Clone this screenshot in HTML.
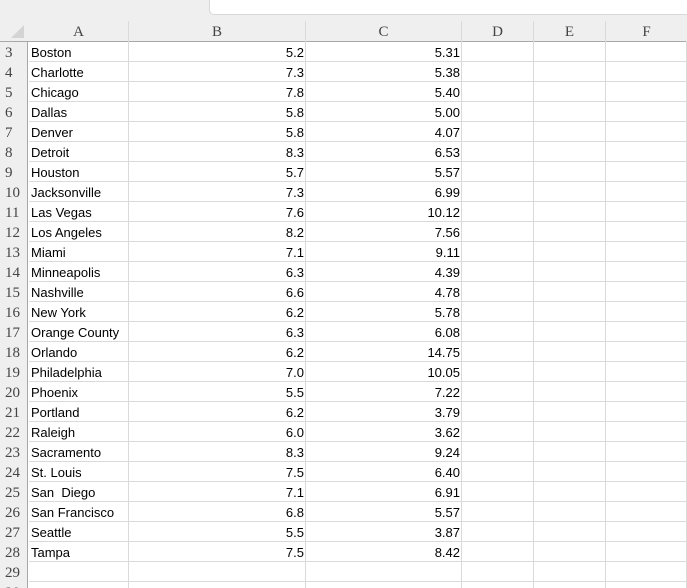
<!DOCTYPE html>
<html style="overflow:hidden;height:588px"><head><style>
body{margin:0;width:687px;height:588px;overflow:hidden;background:#fff;font-family:"Liberation Sans",sans-serif;position:relative}
.top{position:absolute;left:0;top:0;width:687px;height:21px;background:#efefef}
.box{position:absolute;left:209px;top:-1px;width:490px;height:14px;background:#fff;border:1px solid #d8d8d8;border-radius:0 0 0 5px}
.hdr{position:absolute;top:21px;height:20px;left:0;width:687px;background:#efefef;border-bottom:1px solid #a8a8a8}
.ch{position:absolute;top:21px;height:20px;line-height:22px;text-align:center;font-family:"Liberation Serif",serif;font-size:15px;color:#444;border-right:1px solid #dadada}
.rh{position:absolute;left:0;width:28px;height:20px;background:#efefef;border-right:1px solid #a8a8a8;font-family:"Liberation Serif",serif;font-size:15px;color:#444;line-height:23px;padding-left:5px;box-sizing:border-box}
.row{position:absolute;left:29px;width:658px;height:20px;border-bottom:1px solid #dadada;box-sizing:border-box}
.vl{position:absolute;top:41px;height:547px;width:1px;background:#dadada}
.c{position:absolute;height:20px;line-height:20px;font-size:13px;color:#000}
.a{left:31px}
.b{right:383px;text-align:right}
.cc{right:227px;text-align:right}
.tri{position:absolute;left:11px;top:25px;width:0;height:0;border-left:13px solid transparent;border-bottom:13px solid #d4d4d4}
</style></head><body>
<div class="top"></div><div class="box"></div>
<div class="hdr"></div><div class="tri"></div>
<div class="ch" style="left:29px;width:99px">A</div>
<div class="ch" style="left:129px;width:176px">B</div>
<div class="ch" style="left:306px;width:155px">C</div>
<div class="ch" style="left:462px;width:71px">D</div>
<div class="ch" style="left:534px;width:71px">E</div>
<div class="ch" style="left:606px;width:81px">F</div>
<div class="vl" style="left:128px"></div><div class="vl" style="left:305px"></div><div class="vl" style="left:461px"></div><div class="vl" style="left:533px"></div><div class="vl" style="left:605px"></div><div class="vl" style="left:686px"></div>
<div id="g"></div>
<script>
var d=[["Boston","5.2","5.31"],["Charlotte","7.3","5.38"],["Chicago","7.8","5.40"],["Dallas","5.8","5.00"],["Denver","5.8","4.07"],["Detroit","8.3","6.53"],["Houston","5.7","5.57"],["Jacksonville","7.3","6.99"],["Las Vegas","7.6","10.12"],["Los Angeles","8.2","7.56"],["Miami","7.1","9.11"],["Minneapolis","6.3","4.39"],["Nashville","6.6","4.78"],["New York","6.2","5.78"],["Orange County","6.3","6.08"],["Orlando","6.2","14.75"],["Philadelphia","7.0","10.05"],["Phoenix","5.5","7.22"],["Portland","6.2","3.79"],["Raleigh","6.0","3.62"],["Sacramento","8.3","9.24"],["St. Louis","7.5","6.40"],["San  Diego","7.1","6.91"],["San Francisco","6.8","5.57"],["Seattle","5.5","3.87"],["Tampa","7.5","8.42"],["","",""],["","",""]];
var h="";
for(var i=0;i<d.length;i++){var y=42+i*20;var hh=Math.min(20,588-y);
h+='<div class="row" style="top:'+y+'px;height:'+hh+'px;'+(hh<20?'border:none':'')+'"></div><div class="rh" style="top:'+y+'px;height:'+hh+'px;overflow:hidden">'+(i+3)+'</div>';
h+='<div class="c a" style="top:'+(y+1)+'px;white-space:pre">'+d[i][0]+'</div><div class="c b" style="top:'+(y+1)+'px">'+d[i][1]+'</div><div class="c cc" style="top:'+(y+1)+'px">'+d[i][2]+'</div>';}
document.getElementById("g").innerHTML=h;
</script>
</body></html>
